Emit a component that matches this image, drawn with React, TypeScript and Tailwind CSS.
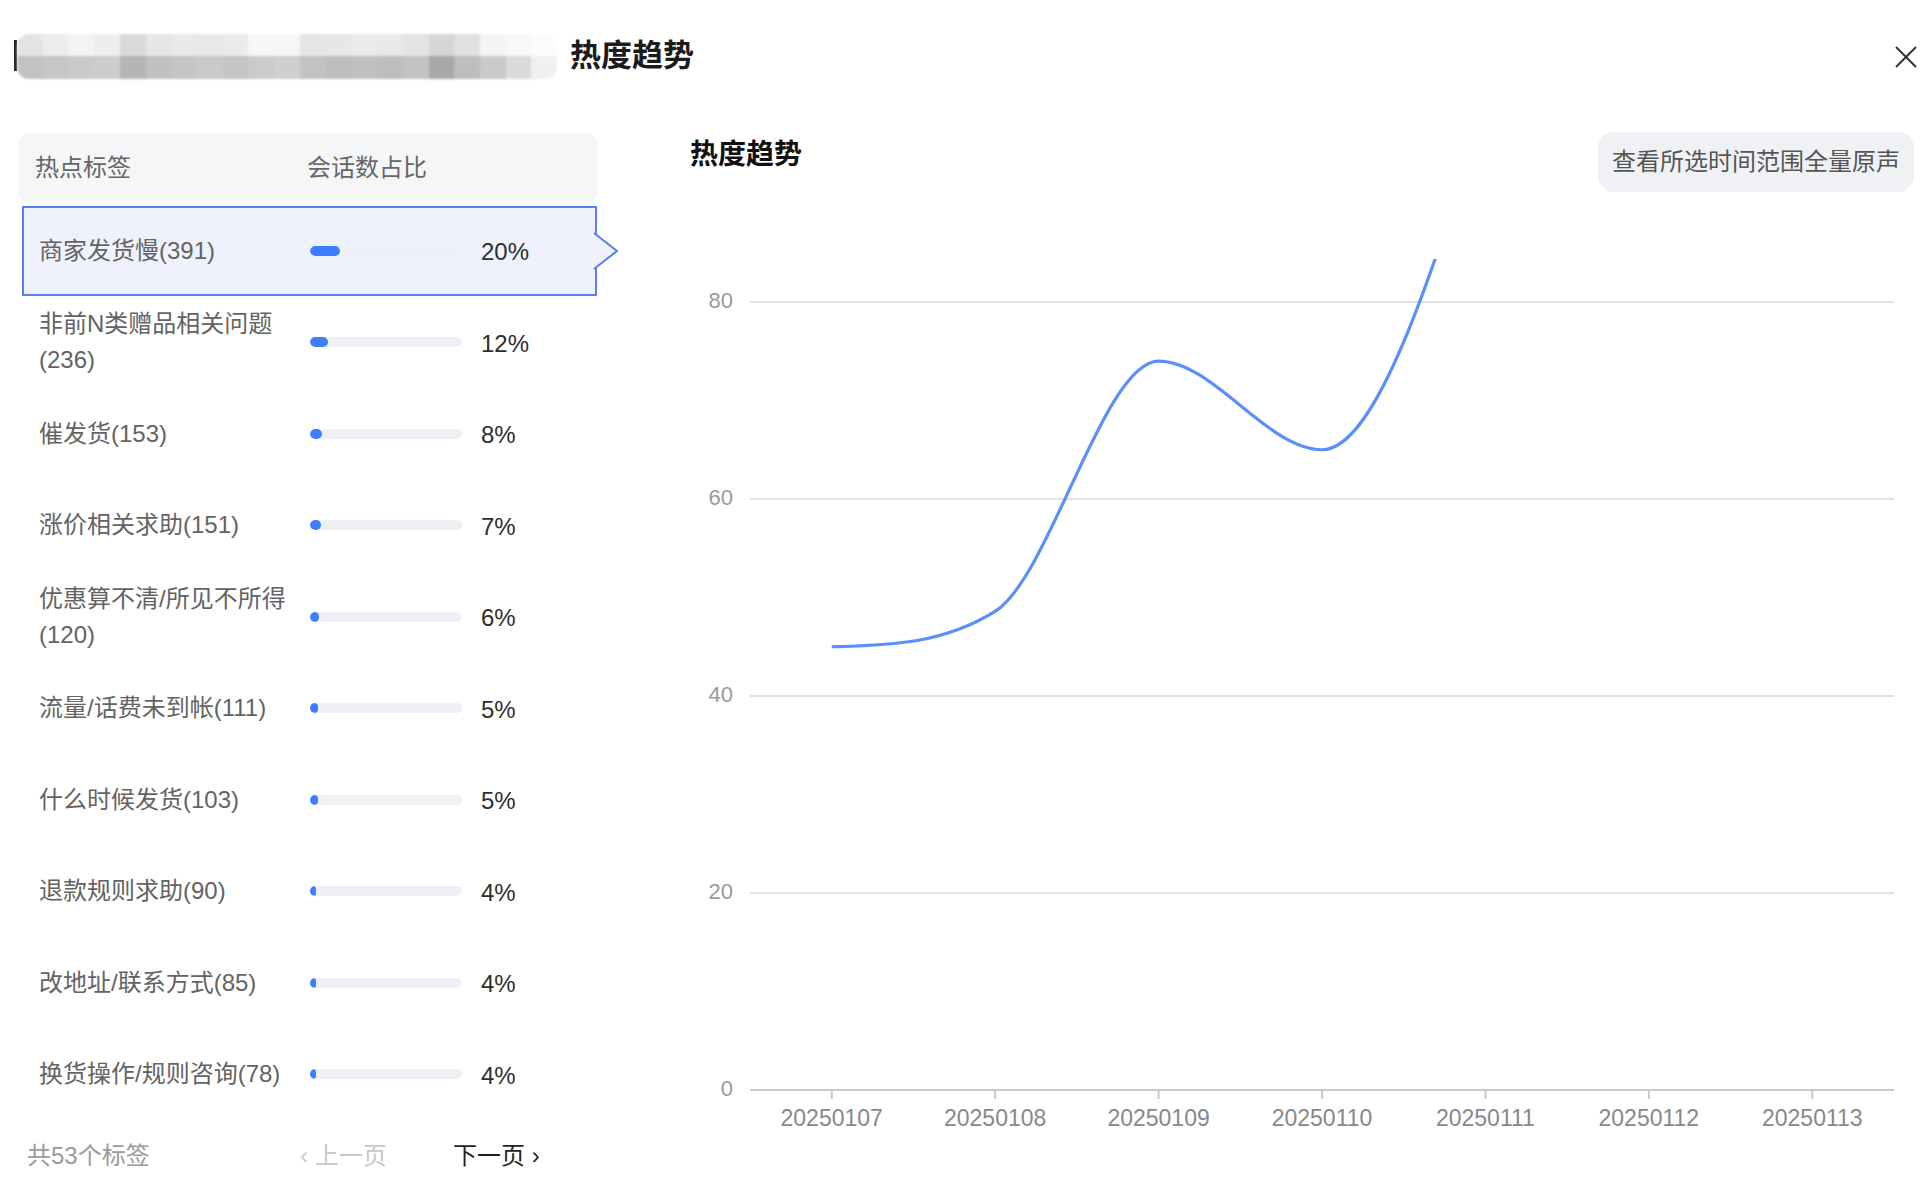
import React from "react";

type Row = { label: string; pct: number };

const rows: Row[] = [
  { label: "商家发货慢(391)", pct: 20 },
  { label: "非前N类赠品相关问题(236)", pct: 12 },
  { label: "催发货(153)", pct: 8 },
  { label: "涨价相关求助(151)", pct: 7 },
  { label: "优惠算不清/所见不所得(120)", pct: 6 },
  { label: "流量/话费未到帐(111)", pct: 5 },
  { label: "什么时候发货(103)", pct: 5 },
  { label: "退款规则求助(90)", pct: 4 },
  { label: "改地址/联系方式(85)", pct: 4 },
  { label: "换货操作/规则咨询(78)", pct: 4 },
];

const topMosaic = [
  "bg-[#e4e4e4]", "bg-[#ececec]", "bg-[#f3f3f3]", "bg-[#eeeeee]", "bg-[#d9d9d9]", "bg-[#e6e6e6]", "bg-[#e9e9e9]",
  "bg-[#e8e8e8]", "bg-[#ebebeb]", "bg-[#f7f7f7]", "bg-[#f6f6f6]", "bg-[#e5e5e5]", "bg-[#e7e7e7]", "bg-[#eaeaea]",
  "bg-[#e9e9e9]", "bg-[#e3e3e3]", "bg-[#d6d6d6]", "bg-[#e1e1e1]", "bg-[#f5f5f5]", "bg-[#f8f8f8]", "bg-[#fbfbfb]",
];
const bottomMosaic = [
  "bg-[#c2c2c2]", "bg-[#c6c6c6]", "bg-[#cacaca]", "bg-[#cdcdcd]", "bg-[#b5b5b5]", "bg-[#c1c1c1]", "bg-[#c5c5c5]",
  "bg-[#c9c9c9]", "bg-[#c4c4c4]", "bg-[#cbcbcb]", "bg-[#cfcfcf]", "bg-[#c2c2c2]", "bg-[#bebebe]", "bg-[#c1c1c1]",
  "bg-[#bdbdbd]", "bg-[#c3c3c3]", "bg-[#a9a9a9]", "bg-[#bdbdbd]", "bg-[#cacaca]", "bg-[#dadada]", "bg-[#f0f0f0]",
];

function hermitePath(pts: [number, number][], t: number[]): string {
  let d = `M${pts[0][0]},${pts[0][1]}`;
  for (let i = 0; i < pts.length - 1; i++) {
    const dx = (pts[i + 1][0] - pts[i][0]) / 3;
    d += ` C${pts[i][0] + dx},${pts[i][1] + dx * t[i]} ${pts[i + 1][0] - dx},${pts[i + 1][1] - dx * t[i + 1]} ${pts[i + 1][0]},${pts[i + 1][1]}`;
  }
  return d;
}

const xLabels = ["20250107", "20250108", "20250109", "20250110", "20250111", "20250112", "20250113"];
const xStart = 750;
const xEnd = 1894;
const band = (xEnd - xStart) / 7;
const xCenter = (i: number) => xStart + band * (i + 0.5);
const yOf = (v: number) => 1090 - v * 9.85;

const values = [45, 48.6, 74, 65, 100];
const linePts: [number, number][] = values.map((v, i) => [xCenter(i), yOf(v)]);
const tangents = [-0.03, -0.62, 0, 0, -3.16];

function Chart() {
  const grid = [80, 60, 40, 20];
  return (
    <svg width={1240} height={968} viewBox="680 192 1240 968" className="block">
      <defs>
        <clipPath id="plotclip">
          <rect x={680} y={259} width={1240} height={900} />
        </clipPath>
      </defs>
      {grid.map((v) => (
        <line key={v} x1={xStart} x2={xEnd} y1={yOf(v)} y2={yOf(v)} stroke="#e2e2e2" strokeWidth={2} />
      ))}
      <line x1={xStart} x2={xEnd} y1={1090} y2={1090} stroke="#c9c9c9" strokeWidth={2} />
      {[80, 60, 40, 20, 0].map((v) => (
        <text
          key={v}
          x={733}
          y={yOf(v)}
          textAnchor="end"
          dominantBaseline="middle"
          fontFamily="Liberation Sans, Arial, sans-serif"
          fontSize={22}
          fill="#9a9a9a"
        >
          {v}
        </text>
      ))}
      {xLabels.map((l, i) => (
        <g key={l}>
          <line x1={xCenter(i)} x2={xCenter(i)} y1={1090} y2={1099} stroke="#c9c9c9" strokeWidth={2} />
          <text
            x={xCenter(i)}
            y={1120}
            textAnchor="middle"
            dominantBaseline="middle"
            fontFamily="Liberation Sans, Arial, sans-serif"
            fontSize={23}
            fill="#888888"
          >
            {l}
          </text>
        </g>
      ))}
      <path
        d={hermitePath(linePts, tangents)}
        fill="none"
        stroke="#5b8ff9"
        strokeWidth={3.2}
        strokeLinecap="butt"
        clipPath="url(#plotclip)"
      />
    </svg>
  );
}

function ListRow({ row, selected }: { row: Row; selected: boolean }) {
  return (
    <div className="h-[91.5px] py-[1px] pl-[4px] pr-[1px] flex">
      <div
        className={
          selected
            ? "relative flex-1 flex items-center border-2 border-[#5a7df6] bg-[#eff2fd] pl-[15px]"
            : "relative flex-1 flex items-center border-2 border-transparent pl-[15px]"
        }
      >
        <div className="w-[256px] text-[24px] leading-[36px] text-[#636363]">{row.label}</div>
        <div className="ml-[15px] w-[152px] h-[10px] rounded-full bg-[#eef0f5] overflow-hidden">
          <div className="h-full rounded-full bg-[#3d7eff]" style={{ width: `${(row.pct / 100) * 152}px` }} />
        </div>
        <div className="ml-[19px] mt-[3px] text-[24px] text-[#2e2e2e]">{row.pct}%</div>
        {selected && (
          <svg
            width={26}
            height={36}
            viewBox="0 0 26 36"
            className="absolute -right-[24px] top-1/2 -translate-y-1/2 overflow-visible"
          >
            <polygon points="0,0 2,0 25,18 2,36 0,36" fill="#eff2fd" />
            <polyline points="1,0 24,18 1,36" fill="none" stroke="#5a7df6" strokeWidth={2} />
          </svg>
        )}
      </div>
    </div>
  );
}

export default function App() {
  return (
    <div className="w-[1920px] h-[1198px] bg-white overflow-hidden font-['Liberation_Sans','Noto_Sans_CJK_SC',sans-serif]">
      {/* top bar */}
      <div className="h-[110px] flex items-center pl-[14px]">
        <div className="w-[3px] h-[31px] bg-[#222]" />
        <div className="w-[540px] h-[45px] mt-[2px] rounded-[12px] overflow-hidden flex flex-col blur-[1px]">
          <div className="flex-1 flex">
            {topMosaic.map((c, i) => (
              <div key={i} className={"flex-1 " + c} />
            ))}
          </div>
          <div className="flex-1 flex">
            {bottomMosaic.map((c, i) => (
              <div key={i} className={"flex-1 " + c} />
            ))}
          </div>
        </div>
        <div className="ml-[13px] text-[31px] font-bold text-[#1b1b1b] leading-none">热度趋势</div>
        <div className="ml-auto mr-[3px] mt-[4px]">
          <svg width={22} height={22} viewBox="0 0 22 22">
            <line x1={1} y1={1} x2={21} y2={21} stroke="#333" strokeWidth={2} />
            <line x1={21} y1={1} x2={1} y2={21} stroke="#333" strokeWidth={2} />
          </svg>
        </div>
      </div>

      <div className="flex">
        {/* left list */}
        <div className="ml-[18px] mt-[23px] w-[580px] flex flex-col">
          <div className="h-[70px] rounded-[12px] bg-[#f5f6f8] flex items-center text-[24px] text-[#666]">
            <div className="pl-[17px] w-[289px]">热点标签</div>
            <div>会话数占比</div>
          </div>
          <div className="mt-[2px] flex flex-col">
            {rows.map((r, i) => (
              <ListRow key={r.label} row={r} selected={i === 0} />
            ))}
          </div>
          <div className="h-[72px] flex items-center pl-[9px] text-[24px]">
            <div className="w-[273px] text-[#9a9a9a]">共53个标签</div>
            <div className="w-[153px] text-[#c8c8c8]">‹ 上一页</div>
            <div className="text-[#1f1f1f]">下一页 ›</div>
          </div>
        </div>

        {/* right chart */}
        <div className="ml-[82px] mt-[22px] w-[1240px] flex flex-col">
          <div className="flex justify-between items-start pl-[10px] pr-[6px]">
            <div className="h-[46px] leading-[46px] text-[28px] font-bold text-[#111]">热度趋势</div>
            <div className="h-[60px] px-[14px] rounded-[16px] bg-[#f0f1f4] flex items-center text-[24px] text-[#555]">
              查看所选时间范围全量原声
            </div>
          </div>
          <Chart />
        </div>
      </div>
    </div>
  );
}
